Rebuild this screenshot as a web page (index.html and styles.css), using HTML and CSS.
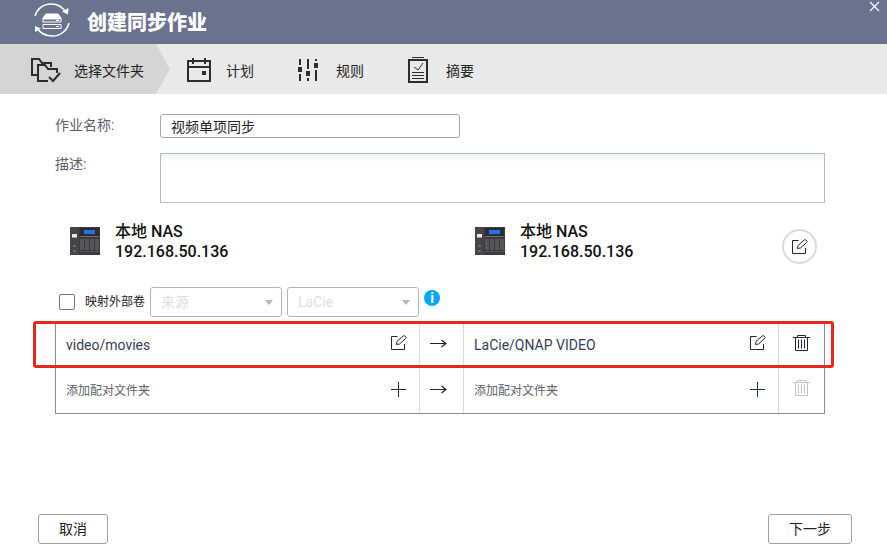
FILE: index.html
```html
<!DOCTYPE html>
<html lang="zh-Hans">
<head>
    <meta charset="UTF-8">
    <meta name="viewport" content="width=device-width, initial-scale=1.0">
    <title>创建同步作业</title>
    <link rel="stylesheet" href="styles.css">
</head>
<body>

    <!-- 共用图标 -->
    <svg class="symbols" aria-hidden="true">
        <symbol id="icon-edit" viewBox="0 0 16 16">
            <path d="M6.5 1.5H.5v13h13V9" fill="none" stroke="currentColor"/>
            <path d="M5.5 9.5l.5-3L12.3.9a1 1 0 0 1 1.4 0l1.1 1.1a1 1 0 0 1 0 1.4L8.5 9z" fill="none" stroke="currentColor"/>
        </symbol>
        <symbol id="icon-plus" viewBox="0 0 16 16">
            <path d="M0 8.5h15M7.5 1v15" fill="none" stroke="currentColor"/>
        </symbol>
        <symbol id="icon-arrow" viewBox="0 0 17 10">
            <path d="M0 5.5h16M11.5 2l4.5 3.5-4.5 3.5" fill="none" stroke="currentColor" stroke-width="1.2"/>
        </symbol>
        <symbol id="icon-trash" viewBox="0 0 17 17">
            <path d="M0 2.5h17M4.5 2V.5h8V2M2.5 3v12.5h12V3M5.5 4.5v9M8.5 4.5v9M11.5 4.5v9" fill="none" stroke="currentColor"/>
        </symbol>
        <symbol id="icon-nas" viewBox="0 0 30 28">
            <path d="M0 0h30v28H0z" fill="#3b3b3f"/>
            <path d="M0 0h9v28H0z" fill="#454549"/>
            <path d="M10 1h19v8H10z" fill="#2c2c30"/>
            <path d="M14 3h11v4H14z" fill="#2173f5"/>
            <path d="M2 7h5v3H2z" fill="#ece7df"/>
            <path d="M2 10h5v1H2z" fill="#b99a62"/>
            <path d="M10 9h19v1H10z" fill="#77705c"/>
            <path d="M10 12h4v11h-4zM15 12h4v11h-4zM20 12h4v11h-4zM25 12h4v11h-4z" fill="#56565a"/>
            <path d="M10 24h19v1H10z" fill="#57575b"/>
            <path d="M3 18h3v2H3zM3 23h3v2H3z" fill="#68686c"/>
        </symbol>
    </svg>

    <header class="header">
        <svg class="logo" viewBox="0 0 36 36" width="36" height="36" fill="none" stroke="#fff">
            <path d="M1 14C3 7 9 2 17 2c7 0 12 3 15 9M35 21c-2 8-9 13-16 13-7 0-13-3-16-8" stroke-width="1.5"/>
            <path d="M28 9.5l6 3 .5-6.5zM7 26.5l-6-2.5v6z" fill="#fff" stroke="none"/>
            <path d="M12 12h12l3 4v1H9v-1z" fill="#fff"/>
            <path d="M9 16.5h18v3.5H9zM9 22.5h18v4H9z"/>
            <path d="M22 18.5h3M22 24.5h3"/>
        </svg>
        <h1>创建同步作业</h1>
        <button class="close" type="button" aria-label="关闭">
            <svg viewBox="0 0 11 11" width="11" height="11"><path d="M1 1l9 9M10 1l-9 9" stroke="#fff" stroke-width="1.2"/></svg>
        </button>
    </header>

    <!-- 步骤 -->
    <nav class="steps">
        <a class="step step-active" href="#folders">
            <svg viewBox="0 0 30 26" width="30" height="26" fill="none" stroke="#2d2d2d" stroke-width="2">
                <path d="M6 18H1V2h7l3 4h9v4"/>
                <path d="M17 24H7V8h7l3 4h9v4"/>
                <path d="M18 20l4 4 7-8"/>
            </svg>
            <span>选择文件夹</span>
        </a>
        <a class="step" href="#schedule">
            <svg viewBox="0 0 24 24" width="24" height="24" fill="none" stroke="#2d2d2d" stroke-width="2">
                <path d="M1 3h22v20H1zM0 9h24M6 0v6M18 0v6"/>
                <path d="M15 13h4v4h-4z" fill="#2d2d2d" stroke="none"/>
            </svg>
            <span>计划</span>
        </a>
        <a class="step" href="#rules">
            <svg viewBox="0 0 24 24" width="24" height="24" fill="#2d2d2d">
                <path d="M2 1h2v6H2zM1 9h4v5H1zM2 16h2v7H2zM10 1h2v10h-2zM9 13h4v5H9zM10 20h2v3h-2zM18 1h2v2h-2zM17 5h4v5h-4zM18 12h2v11h-2z"/>
            </svg>
            <span>规则</span>
        </a>
        <a class="step" href="#summary">
            <svg viewBox="0 0 24 26" width="24" height="26" fill="none" stroke="#2d2d2d">
                <path d="M2 3h18v22H2z" stroke-width="2"/>
                <path d="M5 .5h12M5 15.5h12M5 18.5h12M5 21.5h12M7 10l4 3 5-7"/>
            </svg>
            <span>摘要</span>
        </a>
    </nav>

    <main class="content">
        <div class="field">
            <label for="job-name">作业名称:</label>
            <input id="job-name" type="text" value="视频单项同步">
        </div>
        <div class="field">
            <label for="job-desc">描述:</label>
            <textarea id="job-desc"></textarea>
        </div>

        <!-- 来源与目标 NAS -->
        <div class="devices">
            <div class="device">
                <svg width="30" height="28"><use href="#icon-nas"/></svg>
                <p>本地 NAS<br>192.168.50.136</p>
            </div>
            <div class="device">
                <svg width="30" height="28"><use href="#icon-nas"/></svg>
                <p>本地 NAS<br>192.168.50.136</p>
            </div>
            <button class="round-btn" type="button" aria-label="编辑">
                <svg width="16" height="16"><use href="#icon-edit"/></svg>
            </button>
        </div>

        <div class="mapping">
            <input id="map-volume" type="checkbox">
            <label for="map-volume">映射外部卷</label>
            <div class="select">
                <select aria-label="来源" disabled>
                    <option>来源</option>
                </select>
            </div>
            <div class="select">
                <select aria-label="目标" disabled>
                    <option>LaCie</option>
                </select>
            </div>
            <span class="info">i</span>
        </div>

        <!-- 配对文件夹 -->
        <div class="pairs-wrap">
            <table class="pairs">
                <colgroup>
                    <col class="col-source">
                    <col class="col-arrow">
                    <col>
                    <col class="col-delete">
                </colgroup>
                <tr>
                    <td>
                        <div class="folder">
                            <span class="path">video/movies</span>
                            <button type="button" aria-label="编辑"><svg width="16" height="16"><use href="#icon-edit"/></svg></button>
                        </div>
                    </td>
                    <td class="arrow"><svg width="17" height="10"><use href="#icon-arrow"/></svg></td>
                    <td>
                        <div class="folder">
                            <span class="path">LaCie/QNAP VIDEO</span>
                            <button type="button" aria-label="编辑"><svg width="16" height="16"><use href="#icon-edit"/></svg></button>
                        </div>
                    </td>
                    <td class="delete"><button type="button" aria-label="删除"><svg width="17" height="17"><use href="#icon-trash"/></svg></button></td>
                </tr>
                <tr>
                    <td>
                        <div class="folder">
                            <span>添加配对文件夹</span>
                            <button type="button" aria-label="添加"><svg width="16" height="16"><use href="#icon-plus"/></svg></button>
                        </div>
                    </td>
                    <td class="arrow"><svg width="17" height="10"><use href="#icon-arrow"/></svg></td>
                    <td>
                        <div class="folder">
                            <span>添加配对文件夹</span>
                            <button type="button" aria-label="添加"><svg width="16" height="16"><use href="#icon-plus"/></svg></button>
                        </div>
                    </td>
                    <td class="delete"><button type="button" aria-label="删除" disabled><svg width="17" height="17"><use href="#icon-trash"/></svg></button></td>
                </tr>
            </table>
            <div class="highlight"></div>
        </div>
    </main>

    <footer class="footer">
        <button type="button">取消</button>
        <button type="button">下一步</button>
    </footer>

</body>
</html>
```
FILE: styles.css
```css
/* 基本的页面样式 */
* {
    box-sizing: border-box;
}

body {
    font-family: Roboto, "Noto Sans CJK SC", sans-serif;
    font-size: 14px;
    line-height: 20px;
    color: #222;
    margin: 0;
    min-height: 100vh;
    display: flex;
    flex-direction: column;
    background-color: #fff;
}

button,
input,
select,
textarea {
    font: inherit;
    color: inherit;
}

svg {
    display: block;
    flex-shrink: 0;
}

.symbols {
    position: absolute;
    width: 0;
    height: 0;
}

/* 标题栏 */
.header {
    display: flex;
    align-items: center;
    gap: 17px;
    height: 44px;
    padding: 0 7px 4px 34px;
    background-color: #6b728d;
}

.header h1 {
    flex: 1;
    margin: 0;
    padding-top: 6px;
    font-size: 20px;
    font-weight: 900;
    color: #fff;
}

.close {
    align-self: flex-start;
    padding: 1px 0;
    border: 0;
    background: none;
}

/* 步骤导航 */
.steps {
    display: flex;
    height: 50px;
    background-color: #e9e9e9;
}

.step {
    display: flex;
    align-items: center;
    gap: 15px;
    padding: 2px 26px 0 17px;
    color: #222;
    text-decoration: none;
}

.step span {
    padding-top: 2px;
}

.step-active {
    gap: 13px;
    padding-left: 31px;
    background-color: #d5d5d5;
    clip-path: polygon(0 0, calc(100% - 14px) 0, 100% 50%, calc(100% - 14px) 100%, 0 100%);
}

/* 表单 */
.content {
    padding: 20px 62px 0 55px;
}

.field {
    display: flex;
    align-items: flex-start;
    margin-bottom: 15px;
}

.field label {
    width: 105px;
    padding-top: 1px;
    color: #5c6068;
}

.field input {
    width: 300px;
    height: 24px;
    padding: 0 10px;
    border: 1px solid #a6a6a6;
    border-radius: 3px;
}

.field textarea {
    flex: 1;
    height: 50px;
    border: 1px solid #b8bbba;
    background: linear-gradient(#f1f4f3, #fff 8px);
    resize: none;
}

.devices {
    display: grid;
    grid-template-columns: 405px 1fr auto;
    align-items: center;
    padding: 1px 8px 0 15px;
}

.device {
    display: flex;
    align-items: center;
    gap: 15px;
}

.device svg {
    margin-bottom: 2px;
}

.device p {
    margin: 0;
    font-size: 16px;
    font-weight: 500;
    color: #111;
}

.round-btn {
    display: grid;
    place-items: center;
    width: 35px;
    height: 35px;
    margin-top: 10px;
    padding: 0;
    border: 2px solid #d6dad8;
    border-radius: 50%;
    background: none;
    color: #20263a;
}

/* 映射外部卷 */
.mapping {
    display: flex;
    align-items: center;
    gap: 5px;
    margin: 23px 0 5px 4px;
}

.mapping input {
    appearance: none;
    width: 16px;
    height: 16px;
    margin: 0 5px 0 0;
    border: 1px solid #70757e;
    border-radius: 2px;
}

.mapping label {
    font-size: 12px;
}

.select {
    position: relative;
    width: 132px;
}

.select::after {
    content: "";
    position: absolute;
    top: 13px;
    right: 9px;
    border: 4px solid transparent;
    border-top: 5px solid #b5b5b5;
    border-bottom: 0;
}

.select select {
    appearance: none;
    width: 100%;
    height: 30px;
    padding: 0 10px;
    border: 1px solid #b5b5b5;
    border-radius: 3px;
    background: none;
    color: #dedede;
    opacity: 1;
}

.info {
    align-self: flex-start;
    width: 16px;
    height: 16px;
    margin-top: 3px;
    border-radius: 50%;
    background-color: #05a8f7;
    color: #fff;
    font-weight: 700;
    line-height: 16px;
    text-align: center;
}

/* 配对文件夹列表 */
.pairs-wrap {
    position: relative;
}

.pairs {
    width: 100%;
    table-layout: fixed;
    border-collapse: collapse;
    border: 1px solid #8b8b8b;
    font-size: 12px;
    color: #5c6068;
}

.pairs .col-source {
    width: 364px;
}

.pairs .col-arrow {
    width: 44px;
}

.pairs .col-delete {
    width: 46px;
}

.pairs td {
    height: 45px;
    padding: 0 12px 0 10px;
    border: 1px solid #d9d9d9;
}

.pairs tr:first-child td {
    border-top-color: #8b8b8b;
}

.pairs tr:last-child td {
    height: 46px;
    border-bottom-color: #8b8b8b;
}

.pairs td:first-child {
    border-left-color: #8b8b8b;
}

.pairs td:last-child {
    border-right-color: #8b8b8b;
}

.pairs .arrow {
    color: #20263a;
}

.pairs .delete {
    padding: 0;
}

.pairs .delete button {
    margin: 0 auto;
}

.pairs svg {
    margin-bottom: 4px;
}

.folder {
    display: flex;
    align-items: center;
    justify-content: space-between;
}

.path {
    font-size: 14px;
    color: #34405a;
}

.pairs button {
    display: block;
    padding: 0;
    border: 0;
    background: none;
    color: #20263a;
}

.pairs button:disabled {
    color: #c4c4c4;
}

/* 红框标出已配对的文件夹 */
.highlight {
    position: absolute;
    top: -1px;
    left: -22px;
    right: -9px;
    height: 47px;
    border: 3px solid #e5281c;
    border-radius: 3px;
    pointer-events: none;
}

/* 底部按钮 */
.footer {
    display: flex;
    justify-content: space-between;
    margin-top: auto;
    padding: 20px 35px 13px 38px;
}

.footer button {
    height: 30px;
    padding: 0 20px;
    border: 1px solid #a0a0a0;
    border-radius: 3px;
    background-color: #fff;
}
```
